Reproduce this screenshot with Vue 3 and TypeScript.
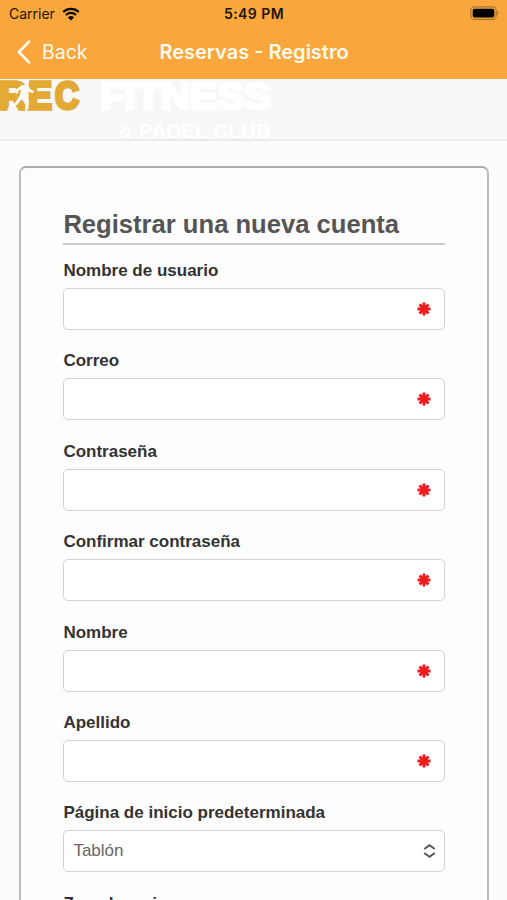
<script setup lang="ts">
interface Field {
  id: string
  label: string
}

const fields: Field[] = [
  { id: 'username', label: 'Nombre de usuario' },
  { id: 'email', label: 'Correo' },
  { id: 'password', label: 'Contraseña' },
  { id: 'confirm', label: 'Confirmar contraseña' },
  { id: 'firstname', label: 'Nombre' },
  { id: 'lastname', label: 'Apellido' },
]
</script>

<template>
  <div class="screen">
    <header class="top">
      <div class="status">
        <div class="carrier">
          <span>Carrier</span>
          <svg class="wifi" width="18" height="14" viewBox="0 0 18 14">
            <path d="M1.2 5 A11.2 11.2 0 0 1 16.8 5" />
            <path d="M4 8 A7.1 7.1 0 0 1 14 8" />
            <path class="solid" d="M9 13.6 L5.9 10.4 A4.5 4.5 0 0 1 12.1 10.4 Z" />
          </svg>
        </div>
        <span class="time">5:49 PM</span>
        <svg class="battery" width="31" height="15" viewBox="0 0 31 15">
          <rect class="case" x="0.8" y="0.8" width="25.4" height="12.6" rx="3.6" />
          <rect x="2.7" y="2.7" width="21.6" height="8.8" rx="1.8" />
          <path class="tip" d="M27.3 4.8 Q30 7.1 27.3 9.4 Z" />
        </svg>
      </div>
      <nav class="nav">
        <a class="back">
          <svg width="14" height="24" viewBox="0 0 14 24"><path d="M12 1.6 L2 12 L12 22.4" /></svg>
          <span>Back</span>
        </a>
        <h1>Reservas - Registro</h1>
        <span></span>
      </nav>
    </header>

    <div class="brand">
      <svg width="280" height="61" viewBox="0 0 280 61">
        <g class="rec">
          <text x="-1" y="29.5" textLength="28" lengthAdjust="spacingAndGlyphs">R</text>
          <text x="28" y="29.5" textLength="24" lengthAdjust="spacingAndGlyphs">E</text>
          <text x="55" y="29.5" textLength="24" lengthAdjust="spacingAndGlyphs">C</text>
        </g>
        <g class="runner">
          <circle cx="26.5" cy="3" r="2.6" />
          <path d="M22 6 L28 6 L30 10 L34 12 L33 14 L28 12.5 L26.5 17 L29 22 L27 32 L25 32 L25.5 24 L22 20 L17 26 L11 28 L8.5 32 L7 31 L10 26 L15 24 L20 16 L21 10 L18.5 12 L17.5 15 L16 14.5 L17 10 Z" />
        </g>
        <text class="fitness" x="100" y="29.5" textLength="171" lengthAdjust="spacingAndGlyphs">FITNESS</text>
        <text class="club" x="118" y="59" textLength="153" lengthAdjust="spacingAndGlyphs">&amp; PADEL CLUB</text>
      </svg>
    </div>

    <main class="content">
      <form class="card">
        <h2>Registrar una nueva cuenta</h2>
        <div v-for="field in fields" :key="field.id" class="field">
          <label>{{ field.label }}</label>
          <div class="control">
            <svg class="required" width="14" height="14" viewBox="-7 -7 14 14">
              <path d="M0 -6.5 V6.5 M-6.5 0 H6.5 M-4.5 -4.5 L4.5 4.5 M-4.5 4.5 L4.5 -4.5" />
            </svg>
          </div>
        </div>
        <div class="field">
          <label>Página de inicio predeterminada</label>
          <div class="control select">
            <span>Tablón</span>
            <svg class="arrows" width="13" height="14" viewBox="0 0 13 14">
              <path d="M1.2 5 L6.5 1.2 L11.8 5 M1.2 9 L6.5 12.8 L11.8 9" />
            </svg>
          </div>
        </div>
        <div class="field">
          <label>Zona horaria</label>
          <div class="control"></div>
        </div>
      </form>
    </main>
  </div>
</template>

<style>
body {
  margin: 0;
  overflow: hidden;
}
</style>

<style scoped>
.screen {
  width: 507px;
  height: 900px;
  overflow: hidden;
  background: #fcfcfb;
  font-family: "Liberation Sans", Arial, sans-serif;
}
.top {
  height: 79px;
  background: #f9a73c;
  font-family: Inter, sans-serif;
}
.status {
  display: grid;
  grid-template-columns: 1fr auto 1fr;
  align-items: center;
  height: 27px;
  padding: 0 6px 0 9px;
  box-sizing: border-box;
  font-size: 14px;
  color: #1c1508;
}
.carrier {
  display: flex;
  align-items: center;
  gap: 7px;
}
.wifi path {
  fill: none;
  stroke: #0b0802;
  stroke-width: 2.2;
}
.wifi .solid {
  fill: #0b0802;
  stroke: none;
}
.time {
  margin-right: 2px;
  font-weight: 600;
  letter-spacing: 0.45px;
}
.battery {
  justify-self: end;
}
.battery .case {
  fill: none;
  stroke: #a8752f;
  stroke-width: 1.2;
}
.battery .tip {
  fill: #a8752f;
}
.nav {
  display: grid;
  grid-template-columns: 1fr auto 1fr;
  align-items: center;
  height: 50px;
  padding: 0 16px 0 17px;
  color: #fffaf0;
}
.back {
  display: flex;
  align-items: center;
  gap: 11px;
  font-size: 19.5px;
}
.back path {
  fill: none;
  stroke: #fffaf0;
  stroke-width: 2.8;
  stroke-linecap: round;
  stroke-linejoin: round;
}
h1 {
  margin: 0;
  font-size: 20px;
  font-weight: 600;
  line-height: 24px;
}
.brand {
  height: 60px;
  background: #f7f7f7;
  border-bottom: 2px solid #ebebeb;
}
.brand svg {
  display: block;
  overflow: visible;
}
.rec text {
  font: 700 38px "Liberation Sans", sans-serif;
  fill: #e2aa35;
  stroke: #e2aa35;
  stroke-width: 3.5;
}
.runner {
  fill: #fafafa;
}
.fitness {
  font: 700 37px "Liberation Sans", sans-serif;
  fill: #fff;
  stroke: #fff;
  stroke-width: 3;
}
.club {
  font: 700 21px "Liberation Sans", sans-serif;
  fill: #fff;
}
.content {
  padding: 24.5px 18px 0 19px;
}
.card {
  height: 900px;
  box-sizing: border-box;
  padding: 41px 42px 0;
  border: 2px solid #bcbcba;
  border-top-color: #adada9;
  border-radius: 7px;
  background: #fdfdfd;
}
h2 {
  height: 36px;
  margin: 0 0 10.5px;
  box-sizing: border-box;
  border-bottom: 2px solid #cbcbcb;
  font-size: 25.6px;
  line-height: 30px;
  color: #555;
  white-space: nowrap;
}
.field {
  height: 90.4px;
}
h2,
.field {
  margin-left: 0.4px;
  margin-right: 0.4px;
}
label {
  display: block;
  height: 33px;
  font-size: 17px;
  font-weight: 700;
  line-height: 31px;
  color: #333;
}
.control {
  display: flex;
  align-items: center;
  justify-content: flex-end;
  height: 42px;
  box-sizing: border-box;
  padding: 0 13px 0 9px;
  border: 1.5px solid #d3d3d3;
  border-radius: 5px;
  background: #fff;
}
.required path {
  fill: none;
  stroke: #ed1c1c;
  stroke-width: 2.9;
}
.select {
  justify-content: space-between;
  padding-right: 8px;
  font-size: 17px;
  color: #666;
}
.arrows path {
  fill: none;
  stroke: #555;
  stroke-width: 1.8;
}
</style>
